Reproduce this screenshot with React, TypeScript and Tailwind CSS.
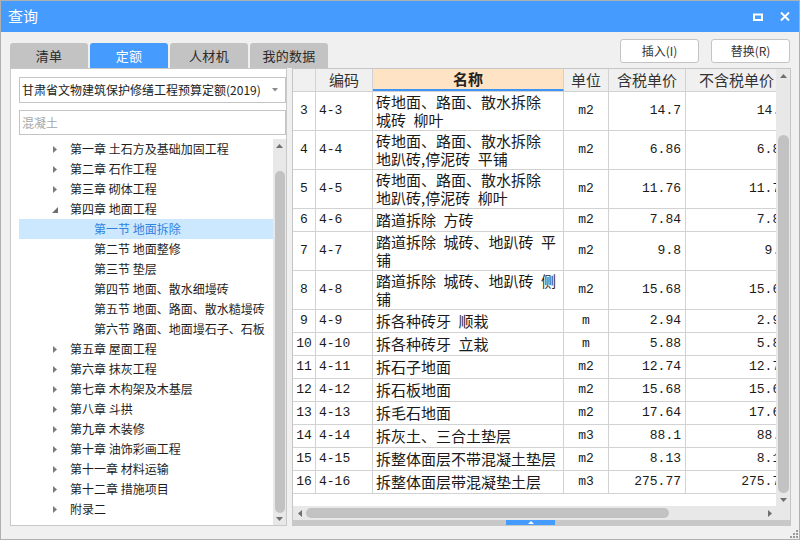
import React from 'react';

type Row = { n: number; code: string; name: string[]; unit: string; price: string };

const S = '\u2002';

const rows: Row[] = [
  { n: 3, code: '4-3', name: ['砖地面、路面、散水拆除', `城砖${S}柳叶`], unit: 'm2', price: '14.7' },
  { n: 4, code: '4-4', name: ['砖地面、路面、散水拆除', `地趴砖,停泥砖${S}平铺`], unit: 'm2', price: '6.86' },
  { n: 5, code: '4-5', name: ['砖地面、路面、散水拆除', `地趴砖,停泥砖${S}柳叶`], unit: 'm2', price: '11.76' },
  { n: 6, code: '4-6', name: [`踏道拆除${S}方砖`], unit: 'm2', price: '7.84' },
  { n: 7, code: '4-7', name: [`踏道拆除${S}城砖、地趴砖${S}平`, '铺'], unit: 'm2', price: '9.8' },
  { n: 8, code: '4-8', name: [`踏道拆除${S}城砖、地趴砖${S}侧`, '铺'], unit: 'm2', price: '15.68' },
  { n: 9, code: '4-9', name: [`拆各种砖牙${S}顺栽`], unit: 'm', price: '2.94' },
  { n: 10, code: '4-10', name: [`拆各种砖牙${S}立栽`], unit: 'm', price: '5.88' },
  { n: 11, code: '4-11', name: ['拆石子地面'], unit: 'm2', price: '12.74' },
  { n: 12, code: '4-12', name: ['拆石板地面'], unit: 'm2', price: '15.68' },
  { n: 13, code: '4-13', name: ['拆毛石地面'], unit: 'm2', price: '17.64' },
  { n: 14, code: '4-14', name: ['拆灰土、三合土垫层'], unit: 'm3', price: '88.1' },
  { n: 15, code: '4-15', name: ['拆整体面层不带混凝土垫层'], unit: 'm2', price: '8.13' },
  { n: 16, code: '4-16', name: ['拆整体面层带混凝垫土层'], unit: 'm3', price: '275.77' },
];

type TreeItem = { label: string; level: 0 | 1; state?: 'open' | 'closed'; selected?: boolean };

const tree: TreeItem[] = [
  { label: '第一章 土石方及基础加固工程', level: 0, state: 'closed' },
  { label: '第二章 石作工程', level: 0, state: 'closed' },
  { label: '第三章 砌体工程', level: 0, state: 'closed' },
  { label: '第四章 地面工程', level: 0, state: 'open' },
  { label: '第一节 地面拆除', level: 1, selected: true },
  { label: '第二节 地面整修', level: 1 },
  { label: '第三节 垫层', level: 1 },
  { label: '第四节 地面、散水细墁砖', level: 1 },
  { label: '第五节 地面、路面、散水糙墁砖', level: 1 },
  { label: '第六节 路面、地面墁石子、石板', level: 1 },
  { label: '第五章 屋面工程', level: 0, state: 'closed' },
  { label: '第六章 抹灰工程', level: 0, state: 'closed' },
  { label: '第七章 木构架及木基层', level: 0, state: 'closed' },
  { label: '第八章 斗拱', level: 0, state: 'closed' },
  { label: '第九章 木装修', level: 0, state: 'closed' },
  { label: '第十章 油饰彩画工程', level: 0, state: 'closed' },
  { label: '第十一章 材料运输', level: 0, state: 'closed' },
  { label: '第十二章 措施项目', level: 0, state: 'closed' },
  { label: '附录二', level: 0, state: 'closed' },
];

const tabs = ['清单', '定额', '人材机', '我的数据'];

function Arrow({ dir }: { dir: 'up' | 'down' | 'left' | 'right' }) {
  const pts = {
    up: '0,4 3.5,0 7,4',
    down: '0,0 7,0 3.5,4',
    left: '4,0 4,7 0,3.5',
    right: '0,0 4,3.5 0,7',
  }[dir];
  const vertical = dir === 'up' || dir === 'down';
  return (
    <svg width={vertical ? 7 : 4} height={vertical ? 4 : 7} className="block">
      <polygon points={pts} fill="#6f6f6f" />
    </svg>
  );
}

function TreeRow({ item }: { item: TreeItem }) {
  return (
    <div
      className={`h-[20px] flex items-center text-[12px] whitespace-nowrap ${
        item.selected ? 'bg-[#cce8ff] text-[#2f82e0]' : 'text-[#1e1e1e]'
      }`}
    >
      {item.level === 0 ? (
        <>
          <span className="w-[34px] shrink-0" />
          <span className="w-[17px] shrink-0 flex items-center">
            {item.state === 'open' ? (
              <svg width="6" height="6" className="block -ml-[1px] mt-[1px]">
                <polygon points="6,0 6,6 0,6" fill="#6f6f6f" />
              </svg>
            ) : (
              <svg width="4" height="7" className="block">
                <polygon points="0,0 4,3.5 0,7" fill="#7a7a7a" />
              </svg>
            )}
          </span>
          <span>{item.label}</span>
        </>
      ) : (
        <>
          <span className="w-[75px] shrink-0" />
          <span>{item.label}</span>
        </>
      )}
    </div>
  );
}

const mono = "font-['Liberation_Mono','Noto_Sans_CJK_SC',monospace] text-[13px]";

export default function App() {
  return (
    <div className="relative w-[800px] h-[540px] overflow-hidden border border-[#b0b0b0] bg-[#f0f0f0] flex flex-col font-['Noto_Sans_CJK_SC',sans-serif]">
      {/* title bar */}
      <div className="h-[31px] shrink-0 bg-[#459bfe] flex items-center pl-[7px] pr-[9px] text-white">
        <span className="text-[15px]">查询</span>
        <div className="ml-auto flex items-center gap-[17px]">
          <svg width="10" height="8" className="block">
            <rect x="1" y="1.5" width="8" height="5.5" fill="none" stroke="white" strokeWidth="2" />
          </svg>
          <svg width="10" height="9" className="block">
            <path d="M1 0.5 L9 8.5 M9 0.5 L1 8.5" stroke="white" strokeWidth="2" />
          </svg>
        </div>
      </div>

      <div className="flex-1 flex flex-col px-[9px]">
        {/* tabs + buttons */}
        <div className="h-[36px] shrink-0 flex justify-between">
          <div className="flex items-end gap-[2px]">
            {tabs.map((t, i) => (
              <div
                key={i}
                className={`w-[78px] h-[25px] rounded-t-[3px] text-center leading-[25px] text-[13px] tracking-[0.3px] ${
                  i === 1 ? 'bg-[#459bfe] text-white' : 'bg-[#c3c3c3] text-[#2a2a2a]'
                }`}
              >
                {t}
              </div>
            ))}
          </div>
          <div className="flex gap-[12px] pt-[7px]">
            <button className="w-[79px] h-[24px] bg-white border border-[#c4c4c4] rounded-[3px] text-[12px] text-[#333]">
              插入(I)
            </button>
            <button className="w-[79px] h-[24px] bg-white border border-[#c4c4c4] rounded-[3px] text-[12px] text-[#333]">
              替换(R)
            </button>
          </div>
        </div>

        {/* main */}
        <div className="h-[458px] shrink-0 flex gap-[5px]">
          {/* left panel */}
          <div className="w-[277px] shrink-0 bg-white border border-[#c8c8c8] pl-[8px] flex flex-col">
            <div className="mt-[8px] h-[26px] border border-[#c4c4c4] flex items-center pl-[2px] pr-[7px] text-[12px] text-[#222] whitespace-nowrap">
              <span>甘肃省文物建筑保护修缮工程预算定额(2019)</span>
              <svg width="6" height="4" className="ml-auto block">
                <polygon points="0,0 6,0 3,3.5" fill="#8a8a8a" />
              </svg>
            </div>
            <div className="mt-[7px] h-[25px] border border-[#c4c4c4] flex items-center pl-[2px] text-[12px] text-[#a8a8a8]">
              混凝土
            </div>
            <div className="mt-[4px] flex-1 flex min-h-0">
              <div className="flex-1 overflow-hidden">
                {tree.map((item) => (
                  <TreeRow key={item.label} item={item} />
                ))}
              </div>
              <div className="w-[13px] bg-[#e8e8e8] flex flex-col items-center">
                <div className="h-[12px] flex items-center justify-center pt-[1px]">
                  <Arrow dir="up" />
                </div>
                <div className="mt-[20px] w-[10px] h-[342px] rounded-full bg-[#c2c2c2]" />
                <div className="flex-1 flex items-center justify-center">
                  <Arrow dir="down" />
                </div>
              </div>
            </div>
          </div>

          {/* right panel */}
          <div className="w-[499px] shrink-0 border-l border-t border-r border-[#c6c6c6] flex flex-col">
            <div className="h-[437px] flex bg-white">
              <div className="w-[483px] overflow-hidden text-[#1a1a1a]">
                <div className="w-[500px]">
                  {/* header */}
                  <div className="h-[23px] flex bg-[#f0f0f0] border-b border-[#d2d2d2] text-[15px] text-[#333]">
                    <div className="w-[23px] shrink-0 border-r border-[#d2d2d2]" />
                    <div className="w-[57px] shrink-0 border-r border-[#d2d2d2] flex items-center justify-center">编码</div>
                    <div className="w-[191px] shrink-0 border-r border-[#d2d2d2] bg-[#fee4c5] border-b-2 border-b-[#3f95f5] flex items-center justify-center font-bold text-[#222]">
                      名称
                    </div>
                    <div className="w-[45px] shrink-0 border-r border-[#d2d2d2] flex items-center justify-center">单位</div>
                    <div className="w-[77px] shrink-0 border-r border-[#d2d2d2] flex items-center justify-center">含税单价</div>
                    <div className="w-[107px] shrink-0 border-r border-[#d2d2d2] flex items-center pl-[13px]">不含税单价</div>
                  </div>
                  {rows.map((r) => (
                    <div
                      key={r.n}
                      className={`flex border-b border-[#d2d2d2] ${r.name.length > 1 ? 'h-[39px]' : 'h-[23px]'}`}
                    >
                      <div className={`w-[23px] shrink-0 border-r border-[#d2d2d2] flex items-center justify-center ${mono}`}>
                        {r.n}
                      </div>
                      <div className={`w-[57px] shrink-0 border-r border-[#d2d2d2] flex items-center pl-[3px] ${mono}`}>
                        {r.code}
                      </div>
                      <div className="w-[191px] shrink-0 border-r border-[#d2d2d2] flex flex-col justify-center pl-[3px] text-[15px] whitespace-nowrap">
                        {r.name.map((l) => (
                          <div key={l} className="h-[18px] leading-[18px]">
                            {l}
                          </div>
                        ))}
                      </div>
                      <div className={`w-[45px] shrink-0 border-r border-[#d2d2d2] flex items-center justify-center ${mono}`}>
                        {r.unit}
                      </div>
                      <div className={`w-[77px] shrink-0 border-r border-[#d2d2d2] flex items-center justify-end pr-[4px] ${mono}`}>
                        {r.price}
                      </div>
                      <div className={`w-[107px] shrink-0 border-r border-[#d2d2d2] flex items-center justify-end pr-[4px] ${mono}`}>
                        {r.price}
                      </div>
                    </div>
                  ))}
                </div>
              </div>
              {/* vertical scrollbar */}
              <div className="w-[14px] bg-[#e8e8e8] flex flex-col items-center">
                <div className="h-[13px] flex items-center justify-center">
                  <Arrow dir="up" />
                </div>
                <div className="mt-[53px] w-[11px] h-[358px] rounded-full bg-[#c2c2c2]" />
                <div className="flex-1 flex items-center justify-center">
                  <Arrow dir="down" />
                </div>
              </div>
            </div>
            {/* horizontal scrollbar */}
            <div className="h-[14px] flex">
              <div className="w-[483px] bg-[#e8e8e8] flex items-center">
                <div className="w-[13px] flex justify-center">
                  <Arrow dir="left" />
                </div>
                <div className="w-[363px] h-[10px] rounded-full bg-[#c2c2c2]" />
                <div className="flex-1 flex justify-end pr-[4px]">
                  <Arrow dir="right" />
                </div>
              </div>
              <div className="flex-1 bg-[#e8e8e8]" />
            </div>
            {/* splitter strip */}
            <div className="h-[6px] bg-[#c8c8c8] flex justify-center pl-[2px]">
              <div className="w-[49px] h-[5px] bg-[#459bfe] flex items-center justify-center mr-[24px]">
                <svg width="6" height="3" className="block">
                  <polygon points="0,3 3,0 6,3" fill="white" />
                </svg>
              </div>
            </div>
          </div>
        </div>
      </div>

      {/* resize grip */}
      <svg width="8" height="8" className="absolute right-[1px] bottom-[1px] block">
        <rect x="6" y="0" width="2" height="2" fill="#9a9a9a" />
        <rect x="3" y="3" width="2" height="2" fill="#9a9a9a" />
        <rect x="6" y="3" width="2" height="2" fill="#9a9a9a" />
        <rect x="0" y="6" width="2" height="2" fill="#9a9a9a" />
        <rect x="3" y="6" width="2" height="2" fill="#9a9a9a" />
        <rect x="6" y="6" width="2" height="2" fill="#9a9a9a" />
      </svg>
    </div>
  );
}
